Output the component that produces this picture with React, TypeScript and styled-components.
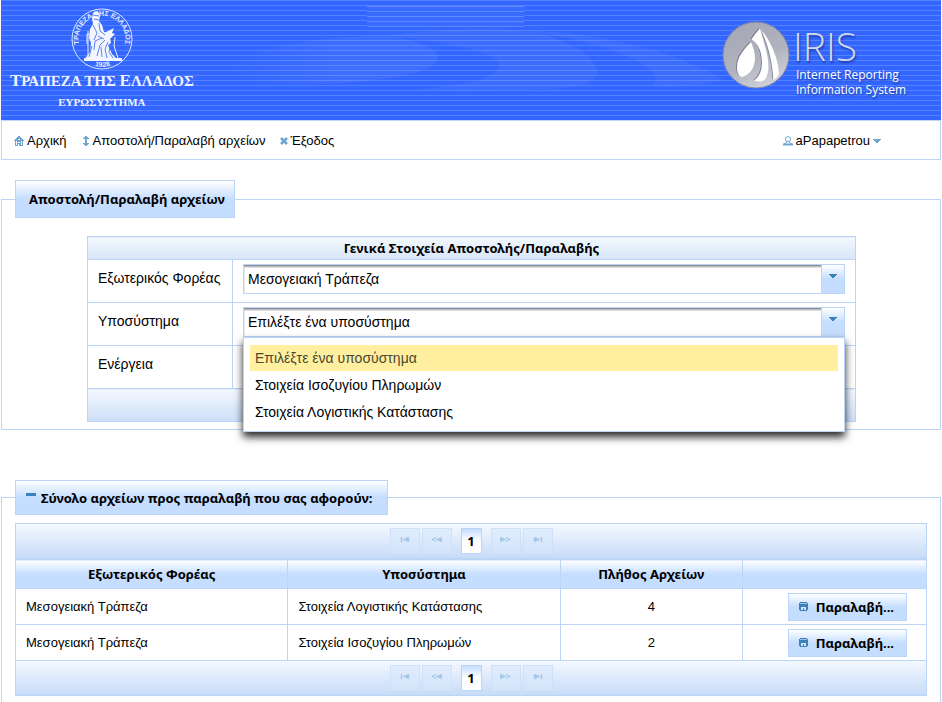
import React from 'react';
import styled, { createGlobalStyle, css } from 'styled-components';

const line = '#bbd5f7';
const tabGradient = 'linear-gradient(to bottom, #ffffff 0%, #c5ddff 50%, #c5ddff 100%)';
const barGradient = 'linear-gradient(to bottom, #f4f8ff 0%, #c8dbf7 100%)';
const bodyFont = '"Liberation Sans", Arial, sans-serif';
const boldFont = '"Noto Sans", Tahoma, sans-serif';

const GlobalStyle = createGlobalStyle`
  *, *::before, *::after { box-sizing: border-box; }
  body {
    margin: 0;
    background: #fff;
    color: #000;
    font: 13px/18px ${bodyFont};
  }
  button, select { font: inherit; color: inherit; margin: 0; }
  svg { display: block; flex: none; }
`;

const Page = styled.div`
  padding: 0 1px;
  height: 100vh;
  overflow: hidden;
`;

/* ---------- banner ---------- */

const Banner = styled.header`
  position: relative;
  display: flex;
  justify-content: space-between;
  height: 120px;
  color: #fff;
  background: repeating-linear-gradient(to bottom, #5580ff 0 1px, #3366ff 1px 5px);
`;

const BannerArt = styled.svg`
  position: absolute;
  inset: 0;
  width: 100%;
  height: 100%;
`;

const BankLogo = styled.div`
  position: relative;
  display: flex;
  flex-direction: column;
  align-items: center;
  padding: 8px 0 0 9px;
  font-family: "Liberation Serif", "Times New Roman", serif;
  font-weight: bold;
  color: #eef3ff;
`;

const BankName = styled.div`
  margin-top: 1px;
  font-size: 15px;
  line-height: 20px;
  white-space: nowrap;
`;

const Initial = styled.span`
  font-size: 17px;
`;

const BankSub = styled.div`
  margin-top: 3px;
  font-size: 11px;
  line-height: 16px;
`;

const SealText = styled.text`
  font: bold 7px "Liberation Sans", Arial, sans-serif;
  fill: #e6edff;
`;

const IrisLogo = styled.div`
  position: relative;
  display: flex;
  align-items: flex-start;
  gap: 6px;
  padding: 21px 35px 0 0;
`;

const IrisWords = styled.div`
  padding-top: 4px;
  font: 12px/15px "Open Sans", sans-serif;
  text-shadow: 1px 2px 2px rgba(0, 20, 90, 0.5);
  white-space: nowrap;
`;

const IrisTitle = styled.div`
  margin-left: -3px;
  font-size: 39px;
  font-weight: 300;
  line-height: 42px;
  color: #d4d8e6;
`;

/* ---------- menu ---------- */

const MenuBar = styled.nav`
  display: flex;
  align-items: center;
  gap: 14px;
  height: 40px;
  padding: 1px 59px 0 12px;
  border: 1px solid ${line};
`;

const MenuLink = styled.a<{ $end?: boolean }>`
  display: flex;
  align-items: center;
  gap: 3px;
  color: #000;
  text-decoration: none;
  white-space: nowrap;
  ${p => p.$end && css`margin-left: auto;`}
`;

/* ---------- fieldsets ---------- */

const Fieldset = styled.fieldset`
  min-width: 0;
  margin: 20px 0 50px;
  padding: 0 13px 7px;
  border: 1px solid ${line};
`;

const Legend = styled.legend<{ $compact?: boolean }>`
  display: flex;
  align-items: center;
  height: ${p => (p.$compact ? 35 : 38)}px;
  padding: ${p => (p.$compact ? '0 15px 0 10px' : '0 9px 0 13px')};
  border: 1px solid ${line};
  background: ${tabGradient};
  font: bold 13px/18px ${boldFont};
  white-space: nowrap;
`;

const LegendToggle = styled.button`
  display: flex;
  align-items: center;
  gap: 5px;
  padding: 0;
  border: 0;
  background: none;
`;

const FormTable = styled.table`
  width: calc(100% - 143px);
  margin: 18px 71px 0 72px;
  border-collapse: collapse;
  font-size: 14px;
`;

const FormTitle = styled.th`
  height: 23px;
  padding: 0;
  border: 1px solid ${line};
  background: linear-gradient(to bottom, #f2f8fd, #d8e6f9);
  font: bold 13px/18px ${boldFont};
`;

const FormLabelCell = styled.th`
  width: 145px;
  height: 43px;
  padding: 9px 10px 0;
  border: 1px solid ${line};
  font-weight: normal;
  text-align: left;
  vertical-align: top;
  white-space: nowrap;
`;

const FormCell = styled.td`
  padding: 4px 10px 0;
  border: 1px solid ${line};
  vertical-align: top;
`;

const FormFooter = styled.td`
  height: 33px;
  border: 1px solid ${line};
  background: linear-gradient(to bottom, #f4f8ff, #cddff8);
`;

const SelectBox = styled.div`
  position: relative;
  display: grid;
  grid-template-columns: 1fr 23px;
  height: 30px;
  border: 1px solid ${line};
`;

const Select = styled.select`
  grid-area: 1 / 1 / 2 / 3;
  appearance: none;
  width: 100%;
  min-width: 0;
  height: 28px;
  padding: 0 28px 0 4px;
  border: 0;
  border-radius: 0;
  background: #fff;
  box-shadow: inset 0 1px 0 #8f9095, inset 0 2px 0 #b9babd, inset 0 3px 0 #dedfe2, inset 1px 0 0 #e3e7ef;
  font-size: 14px;
  outline: 0;
`;

const SelectArrow = styled.span`
  grid-area: 1 / 2;
  z-index: 1;
  display: flex;
  justify-content: center;
  padding-top: 9px;
  border-left: 1px solid ${line};
  background: ${tabGradient};
  pointer-events: none;
`;

const OptionList = styled.ul`
  position: absolute;
  z-index: 5;
  top: 29px;
  left: -1px;
  right: -1px;
  margin: 0;
  padding: 7px 6px 5px;
  list-style: none;
  background: #fff;
  border: 1px solid ${line};
  box-shadow: 0 5px 8px rgba(0, 0, 0, 0.85);
`;

const Option = styled.li<{ $active?: boolean }>`
  height: 26px;
  margin-bottom: 1px;
  padding: 0 5px;
  line-height: 26px;
  ${p => p.$active && css`
    background: #ffef9f;
    color: #4c4830;
  `}
`;

/* ---------- data table ---------- */

const Paginator = styled.div<{ $bottom?: boolean }>`
  display: flex;
  justify-content: center;
  align-items: flex-start;
  gap: 2px;
  height: ${p => (p.$bottom ? 35 : 36)}px;
  margin-top: ${p => (p.$bottom ? 0 : 8)}px;
  padding-top: 4px;
  border: 1px solid ${line};
  ${p => p.$bottom && css`border-top: 0;`}
  background: ${barGradient};
`;

const PageStep = styled.button`
  display: flex;
  justify-content: center;
  width: 30px;
  height: 26px;
  padding: 8px 0 0;
  border: 1px solid #cfe1f8;
  background: linear-gradient(to bottom, #e0ecfc, #d3e5fb);
`;

const PageNumber = styled.button`
  width: 21px;
  height: 26px;
  margin: 0 7px;
  padding: 0;
  border: 1px solid ${line};
  background: linear-gradient(to bottom, #c5ddff, #ffffff 50%);
  font: bold 13px/24px ${boldFont};
`;

const DataTable = styled.table`
  width: 100%;
  table-layout: fixed;
  border-collapse: collapse;
`;

const HeadCell = styled.th<{ $width: number }>`
  width: ${p => p.$width}%;
  height: 29px;
  padding: 0;
  border: 1px solid ${line};
  background: ${tabGradient};
  font: bold 13px/18px ${boldFont};
`;

const Cell = styled.td<{ $align?: string }>`
  height: 36px;
  padding: 0 ${p => (p.$align === 'right' ? 19 : 10)}px;
  border: 1px solid ${line};
  text-align: ${p => p.$align || 'left'};
`;

const ReceiveButton = styled.button`
  display: inline-flex;
  align-items: center;
  gap: 8px;
  height: 28px;
  padding: 0 12px 0 10px;
  border: 1px solid ${line};
  background: ${tabGradient};
  font: bold 13px/18px ${boldFont};
  vertical-align: middle;
`;

/* ---------- drawings ---------- */

const soft = '#6ea6cf';
const strong = '#3a82ba';

const HomeIcon = () => (
  <svg width="10" height="10" viewBox="0 0 10 10" shapeRendering="crispEdges">
    <path d="M4 0h2v1h1v1h1v1h1v1h1v1H9v5H1V5H0V4h1V3h1V2h1V1h1z" fill={soft} />
    <path d="M4 3h2v1H4zM2 5h1v4H2zM7 5h1v4H7zM4 6h2v1H4zM4 8h1v2H4z" fill="#fff" />
  </svg>
);
const UpDownIcon = () => (
  <svg width="9" height="10" viewBox="-1 0 9 10" shapeRendering="crispEdges" fill={soft}>
    <path d="M3 0h2v1h1v1h1v1H5v4h2v1H6v1H5v1H3V9H2V8H1V7h2V3H1V2h1V1h1z" />
  </svg>
);
const CloseIcon = () => (
  <svg width="8" height="8" viewBox="0 0 8 8" fill="none" stroke={soft} strokeWidth="2.6">
    <path d="M1 1l6 6M7 1L1 7" />
  </svg>
);
const PersonIcon = () => (
  <svg width="10" height="10" viewBox="0 0 10 10" fill="none" stroke={soft}>
    <circle cx="5" cy="3.2" r="2.6" />
    <path d="M3.5 5.500v1L1 8M6.500 5.500v1L9 8" />
    <path d="M0 8.500h10" strokeWidth="2" />
  </svg>
);
const Caret = ({ color }: { color: string }) => (
  <svg width="8" height="4" viewBox="0 0 8 4" shapeRendering="crispEdges" fill={color}>
    <path d="M0 0h8v1H7v1H6v1H5v1H3V3H2V2H1V1H0z" />
  </svg>
);
const MinusIcon = () => (
  <svg width="10" height="9" viewBox="0 0 10 9" fill={strong}><path d="M0 0h10v3H0z" /></svg>
);
const DiskIcon = () => (
  <svg width="9" height="9" viewBox="0 0 9 9" shapeRendering="crispEdges">
    <path d="M1 0h7v1h1v7H8v1H1V8H0V1h1z" fill={strong} />
    <path d="M1 1h7v1H1z" fill="#9cc3e6" />
    <path d="M2 5h5v3H5V6H4v2H2z" fill="#d5e6fc" />
  </svg>
);
const stepShapes: Record<string, string> = {
  first: 'M1 0h1v5H1zM3 2.5L9 0v5z',
  prev: 'M5 2.5L11 0v5z',
  next: 'M0 0l6 2.5L0 5z',
  last: 'M1 0l6 2.5L1 5zM8 0h1v5H8z',
};
const StepIcon = ({ kind }: { kind: string }) => (
  <svg width={kind === 'prev' || kind === 'next' ? 11 : 10} height="6" viewBox={`0 0 ${kind === 'prev' || kind === 'next' ? 11 : 10} 6`} fill="#a5c8e4" stroke="#a5c8e4" strokeWidth="0.5">
    <path d={stepShapes[kind]} />
    {kind === 'prev' && <path d="M5 0.4L1 2.5l4 2.1" fill="none" strokeWidth="1.1" />}
    {kind === 'next' && <path d="M6 0.4l4 2.1-4 2.1" fill="none" strokeWidth="1.1" />}
  </svg>
);

const Seal = () => (
  <svg width="62" height="62" viewBox="0 0 62 62" aria-hidden="true">
    <defs>
      <path id="sealTop" d="M12.800 46A23.500 23.500 0 1 1 49.200 46" />
      <path id="sealBottom" d="M20 56.500A29 29 0 0 0 43 56.500" />
    </defs>
    <circle cx="31" cy="31" r="30" fill="none" stroke="#dfe8ff" strokeWidth="1" />
    <SealText><textPath href="#sealTop" startOffset="50%" textAnchor="middle">ΤΡΑΠΕΖΑ ΤΗΣ ΕΛΛΑΔΟΣ</textPath></SealText>
    <SealText><textPath href="#sealBottom" startOffset="50%" textAnchor="middle">1928</textPath></SealText>
    <g fill="#f3f6ff">
      <path d="M22 5c3-3 7-1 7 3l-1 5 3 4 2 7 5 2 2 9-3 2 4 9 6 6H13l6-8 1-9-2-5 1-9 3-5-1-6z" />
      <path d="M33 25l6-3 4-2-2 5 3 1-6 6z" />
      <path d="M13 50h38v3H13z" />
    </g>
    <g fill="none" stroke="#4b78f2" strokeWidth="0.9">
      <path d="M22 7l6 1M23 11l5 1M22 17l4 8-3 7M28 15l1 8 5 4M31 30l-7 3-1 9M34 32l-5 5-3 11M37 34l-3 7 2 9M39 39l-1 5 4 6M21 38l-3 11M30 39l1 10M27 28l6 3" />
    </g>
    <path d="M44 29l-1 9 4 12M17 23v27M19 26h-3v10" fill="none" stroke="#e8eeff" strokeWidth="1" />
  </svg>
);

const IrisMark = () => (
  <svg width="68" height="68" viewBox="0 0 68 68" aria-hidden="true">
    <defs>
      <linearGradient id="disc" x1="0.3" y1="0" x2="0.8" y2="1">
        <stop offset="0" stopColor="#a5a7b5" />
        <stop offset="0.55" stopColor="#b1b3bf" />
        <stop offset="1" stopColor="#d6d7df" />
      </linearGradient>
      <filter id="lift" x="-20%" y="-20%" width="140%" height="140%">
        <feDropShadow dx="-0.8" dy="-0.6" stdDeviation="0.6" floodColor="#4d5062" floodOpacity="0.7" />
      </filter>
    </defs>
    <circle cx="34" cy="34" r="33" fill="url(#disc)" stroke="#8189a8" strokeWidth="1" />
    <g fill="#fff" filter="url(#lift)">
      <path d="M29 21C23 27 15 36 15 46c0 5 2 10 5 10 8-2 13-10 13-19 0-6-2-11-4-16z" />
      <path d="M38 7.500C35 11 32 14 29.500 18.500c8 5 10.500 14 10.500 23 0 8-2.500 14-8 18 3 1.500 8 1.500 11-1 4-5 4-15 2.500-23-1.500-9-5-18-7.500-28z" />
      <path d="M39 8.500c5 11 11 26 12.500 50.500 2-1 4-3 5.500-6C56.500 38 49 20 39 8.500z" />
    </g>
  </svg>
);

const BannerShapes = () => (
  <BannerArt viewBox="0 0 940 120" preserveAspectRatio="none" aria-hidden="true">
    <defs>
      <pattern id="bars" x="0" y="6" width="6" height="5" patternUnits="userSpaceOnUse">
        <path d="M0 0h6v1H0z" fill="#5f88ff" />
        <path d="M0 1h6v4H0z" fill="#396bff" />
      </pattern>
      <linearGradient id="fade" x1="0" x2="1">
        <stop offset="0" stopColor="#fff" stopOpacity="0" />
        <stop offset="0.5" stopColor="#fff" stopOpacity="0.05" />
      </linearGradient>
    </defs>
    <path d="M366 6h157v21H366z" fill="url(#bars)" />
    <g fill="#fff" fillOpacity="0.05">
      <path d="M226 70c20-22 90-34 158-34 30 3 53 12 53 22 0 14-50 23-110 26-60 1-100-3-101-14z" fill="url(#fade)" fillOpacity="1" />
      <path d="M384 36c60-8 120-8 150-4 40 10 62 27 62 41 0 10-20 16-60 16-60 2-90 2-118 0 60-4 80-15 80-24 0-12-50-24-114-29z" />
      <path d="M523 30c90 4 160 25 198 50-30 8-60 7-70 6 20-20-50-44-128-56z" />
    </g>
  </BannerArt>
);

/* ---------- page ---------- */

const subsystems = ['Επιλέξτε ένα υποσύστημα', 'Στοιχεία Ισοζυγίου Πληρωμών', 'Στοιχεία Λογιστικής Κατάστασης'];

const files = [
  { body: 'Μεσογειακή Τράπεζα', system: 'Στοιχεία Λογιστικής Κατάστασης', count: 4 },
  { body: 'Μεσογειακή Τράπεζα', system: 'Στοιχεία Ισοζυγίου Πληρωμών', count: 2 },
];

const Pages = ({ bottom }: { bottom?: boolean }) => (
  <Paginator $bottom={bottom}>
    <PageStep disabled aria-label="Πρώτη σελίδα"><StepIcon kind="first" /></PageStep>
    <PageStep disabled aria-label="Προηγούμενη σελίδα"><StepIcon kind="prev" /></PageStep>
    <PageNumber>1</PageNumber>
    <PageStep disabled aria-label="Επόμενη σελίδα"><StepIcon kind="next" /></PageStep>
    <PageStep disabled aria-label="Τελευταία σελίδα"><StepIcon kind="last" /></PageStep>
  </Paginator>
);

export default function App() {
  return (
    <Page>
      <GlobalStyle />
      <Banner>
        <BannerShapes />
        <BankLogo>
          <Seal />
          <BankName><Initial>Τ</Initial>ΡΑΠΕΖΑ ΤΗΣ <Initial>Ε</Initial>ΛΛΑΔΟΣ</BankName>
          <BankSub>ΕΥΡΩΣΥΣΤΗΜΑ</BankSub>
        </BankLogo>
        <IrisLogo>
          <IrisMark />
          <IrisWords>
            <IrisTitle>IRIS</IrisTitle>
            Internet Reporting<br />Information System
          </IrisWords>
        </IrisLogo>
      </Banner>

      <MenuBar>
        <MenuLink href="#home"><HomeIcon />Αρχική</MenuLink>
        <MenuLink href="#files"><UpDownIcon />Αποστολή/Παραλαβή αρχείων</MenuLink>
        <MenuLink href="#exit"><CloseIcon />Έξοδος</MenuLink>
        <MenuLink href="#user" $end><PersonIcon />aPapapetrou <Caret color={soft} /></MenuLink>
      </MenuBar>

      <Fieldset>
        <Legend>Αποστολή/Παραλαβή αρχείων</Legend>
        <FormTable>
          <thead>
            <tr><FormTitle colSpan={2}>Γενικά Στοιχεία Αποστολής/Παραλαβής</FormTitle></tr>
          </thead>
          <tbody>
            <tr>
              <FormLabelCell scope="row"><label htmlFor="body">Εξωτερικός Φορέας</label></FormLabelCell>
              <FormCell>
                <SelectBox>
                  <Select id="body"><option>Μεσογειακή Τράπεζα</option></Select>
                  <SelectArrow><Caret color={strong} /></SelectArrow>
                </SelectBox>
              </FormCell>
            </tr>
            <tr>
              <FormLabelCell scope="row"><label htmlFor="system">Υποσύστημα</label></FormLabelCell>
              <FormCell>
                <SelectBox>
                  <Select id="system">{subsystems.map(s => <option key={s}>{s}</option>)}</Select>
                  <SelectArrow><Caret color={strong} /></SelectArrow>
                  <OptionList role="listbox">
                    {subsystems.map((s, i) => (
                      <Option key={s} role="option" aria-selected={i === 0} $active={i === 0}>{s}</Option>
                    ))}
                  </OptionList>
                </SelectBox>
              </FormCell>
            </tr>
            <tr>
              <FormLabelCell scope="row">Ενέργεια</FormLabelCell>
              <FormCell />
            </tr>
          </tbody>
          <tfoot>
            <tr><FormFooter colSpan={2} /></tr>
          </tfoot>
        </FormTable>
      </Fieldset>

      <Fieldset>
        <Legend $compact>
          <LegendToggle><MinusIcon />Σύνολο αρχείων προς παραλαβή που σας αφορούν:</LegendToggle>
        </Legend>
        <Pages />
        <DataTable>
          <thead>
            <tr>
              <HeadCell $width={29.9}>Εξωτερικός Φορέας</HeadCell>
              <HeadCell $width={29.9}>Υποσύστημα</HeadCell>
              <HeadCell $width={20}>Πλήθος Αρχείων</HeadCell>
              <HeadCell $width={20.2} aria-label="Ενέργειες" />
            </tr>
          </thead>
          <tbody>
            {files.map(f => (
              <tr key={f.system}>
                <Cell>{f.body}</Cell>
                <Cell>{f.system}</Cell>
                <Cell $align="center">{f.count}</Cell>
                <Cell $align="right"><ReceiveButton><DiskIcon />Παραλαβή...</ReceiveButton></Cell>
              </tr>
            ))}
          </tbody>
        </DataTable>
        <Pages bottom />
      </Fieldset>
    </Page>
  );
}
